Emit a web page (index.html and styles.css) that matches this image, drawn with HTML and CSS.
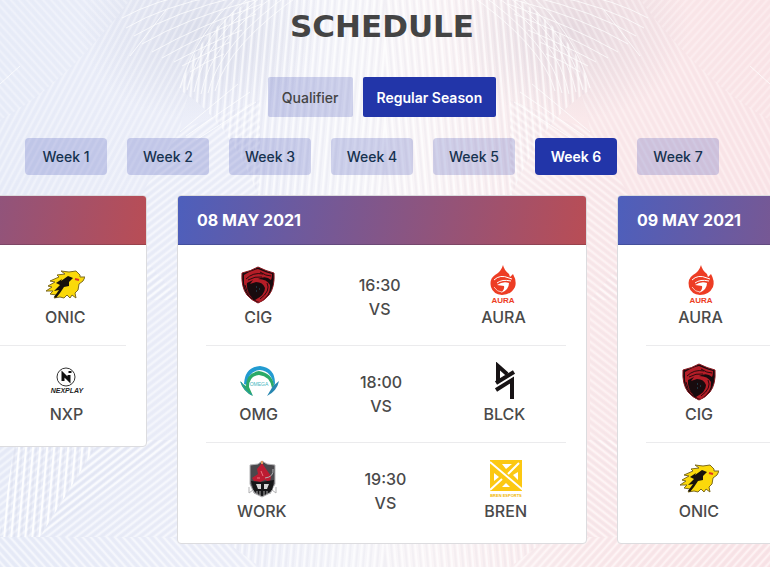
FILE: index.html
```
<!DOCTYPE html>
<html lang="en">
<head>
  <meta charset="UTF-8" />
  <meta name="viewport" content="width=device-width, initial-scale=1.0" />
  <title>Schedule</title>
  <link rel="stylesheet" href="styles.css">
</head>
<body>
  <!-- feather background, left half is mirrored to the right -->
  <svg class="feathers" viewBox="0 0 770 567" preserveAspectRatio="xMidYMid slice" aria-hidden="true">
    <defs>
      <pattern id="barbsA" width="6" height="6" patternUnits="userSpaceOnUse" patternTransform="rotate(28)">
        <path d="M2 0V6" stroke="#fff" stroke-width="2" />
        <path d="M5 0V6" stroke="#8c93b4" stroke-opacity=".14" />
      </pattern>
      <pattern id="barbsB" width="6" height="6" patternUnits="userSpaceOnUse" patternTransform="rotate(52)">
        <path d="M2 0V6" stroke="#fff" stroke-width="2" />
        <path d="M5 0V6" stroke="#8c93b4" stroke-opacity=".16" />
      </pattern>
      <pattern id="barbsC" width="7" height="7" patternUnits="userSpaceOnUse" patternTransform="rotate(5)">
        <path d="M2 0V7" stroke="#fff" stroke-width="2" />
        <path d="M5 0V7" stroke="#8c93b4" stroke-opacity=".18" />
      </pattern>
      <pattern id="barbsD" width="6" height="6" patternUnits="userSpaceOnUse" patternTransform="rotate(-42)">
        <path d="M2 0V6" stroke="#fff" stroke-width="2" />
        <path d="M5 0V6" stroke="#8c93b4" stroke-opacity=".14" />
      </pattern>
      <radialGradient id="shade">
        <stop offset="0" stop-color="#7d82a0" stop-opacity=".16" />
        <stop offset="1" stop-color="#7d82a0" stop-opacity="0" />
      </radialGradient>
      <g id="wing">
        <ellipse cx="200" cy="30" rx="120" ry="90" fill="url(#shade)" />
        <path d="M0 0H130Q60 90 0 120Z" fill="url(#barbsD)" opacity=".25" />
        <path d="M130 0H250Q190 60 180 130L120 230 0 300V120Q70 80 130 0Z" fill="url(#barbsA)" opacity=".3" />
        <path d="M250 0H385V200H260Q230 120 180 90Q190 40 250 0Z" fill="url(#barbsC)" opacity=".65" />
        <path d="M180 130L260 100V200H385V300H120V230Z" fill="url(#barbsB)" opacity=".45" />
        <path d="M0 300L120 230 180 300V440L40 537H0Z" fill="url(#barbsB)" opacity=".4" />
        <path d="M15 440H100L40 537H0Z" fill="url(#barbsC)" opacity=".9" />
        <path d="M100 440H250L220 537H40Z" fill="url(#barbsB)" opacity=".5" />
        <path d="M0 537H220L260 567H0Z" fill="url(#barbsD)" opacity=".5" />
        <path d="M220 537L250 440H385V567H260Z" fill="url(#barbsC)" opacity=".6" />
        <g fill="none" stroke="#fff" stroke-opacity=".75">
          <path d="M122 18Q155 0 200 -8M126 28Q163 6 220 -5M134 36Q174 12 240 -4M142 44Q186 18 255 0M152 52Q198 26 262 4M162 58Q204 34 256 14M174 62Q204 46 242 30M182 66Q205 54 230 42M190 72Q205 62 224 54" />
          <path d="M180 88Q196 30 243 -8M187 90Q201 34 256 -8M194 92Q206 36 268 -8M201 94Q212 38 280 -8M208 93Q220 42 292 -8M215 91Q228 44 304 -8" />
          <path d="M180 132L238 84M186 136L250 92M196 140L256 102M0 84L20 66M130 56L166 10" />
        </g>
      </g>
    </defs>
    <use href="#wing" />
    <use href="#wing" transform="translate(770 0) scale(-1 1)" />
  </svg>

  <!-- team logos -->
  <svg class="sprite" aria-hidden="true">
    <symbol id="onic" viewBox="0 0 40 40">
      <path d="M1 26L7 22 3 21 10 17 5 16 14 12 12 10 20 9 16 6 24 7 31 6 35 10 35 12 40 12 38 16 34 19 33 25 30 28 31 33 27 30 25 33 22 30 19 33 15 32 9 33 11 30 5 29 8 26Z" fill="#fbd90a" stroke="#7d6a20" />
      <path d="M11 18L17 14 16 16 23 11 28 13 24 17 24 21 19 22 15 28 11 33 9 32 14 25 9 26 15 20Z" fill="#17120c" />
      <path d="M30 14L34 15" stroke="#df3426" stroke-width="2" />
    </symbol>
    <symbol id="nxp" viewBox="0 0 40 40">
      <circle cx="19" cy="15" r="9" fill="#fff" stroke="#333" stroke-width="1" />
      <path d="M16 19V12L22 18V13M23 11V9" fill="none" stroke="#111" stroke-width="3" />
      <text x="20" y="31" text-anchor="middle" class="logo-text nxp-text">NEXPLAY</text>
    </symbol>
    <symbol id="cig" viewBox="0 0 40 40">
      <path d="M20 2Q28 6 36 8Q37 22 31 30Q26 36 20 38Q13 35 9 30Q3 22 4 8Q13 6 20 2Z" fill="#180b0e" stroke="#8c1820" />
      <path d="M6 10Q14 5 20 4Q29 8 34 9Q34 13 33 15Q28 10 20 14Q29 14 32 20Q33 30 22 37Q19 37 17 35Q27 30 27 23Q25 17 18 17L12 19 15 15 9 18Q8 26 15 34Q7 28 6 18Z" fill="#b51d27" />
      <path d="M8 14Q15 7 25 9M10 15Q17 11 24 12M22 7Q28 11 33 11M29 18Q33 26 22 34M7 20Q8 27 13 31" fill="none" stroke="#2a0a0e" />
      <path d="M18 22H19M21 24H22M18 26H19" stroke="#276173" />
    </symbol>
    <symbol id="aura" viewBox="0 0 40 40">
      <path d="M20 0Q21 5 26 9L27 12 30 9Q34 16 32 22Q28 30 19 30Q10 29 8 22Q6 14 12 10Q18 7 20 0Z" fill="#ed3d24" />
      <path d="M11 15Q17 9 26 13L29 14M14 18Q19 14 28 16" fill="none" stroke="#fff" stroke-width="1" />
      <path d="M14 20Q20 16 26 18Q26 25 18 28Q22 24 21 21Z" fill="#fff" />
      <path d="M11 22Q14 27 19 27" fill="none" stroke="#fbc3b8" />
      <text x="20" y="38" text-anchor="middle" class="logo-text aura-text">AURA</text>
    </symbol>
    <symbol id="omg" viewBox="0 0 40 40">
      <path d="M5 22Q6 5 21 4Q36 6 36 21L35 25Q33 9 21 8Q9 9 8 23Z" fill="#229bd1" />
      <path d="M7 24Q7 11 20 9Q33 11 35 23L33 26Q31 14 20 13Q10 14 10 25L14 34Q4 30 1 19Q5 23 7 24Z" fill="#2baa67" />
      <path d="M40 19Q38 29 28 34L34 24Z" fill="#2786b0" />
      <path d="M2 20Q6 29 13 33" fill="none" stroke="#2791b6" />
      <text x="20" y="24" text-anchor="middle" class="logo-text omg-text">OMEGA</text>
    </symbol>
    <symbol id="blck" viewBox="0 0 40 40">
      <path d="M14 19V4L23 12M12 21L30 10M12 28L28 18V37" fill="none" stroke="#171315" stroke-width="4" />
    </symbol>
    <symbol id="work" viewBox="0 0 40 40">
      <path d="M8 6L16 5 20 2 25 5 33 6 33 25 28 34 20 38 12 34 8 25Z" fill="#4a484c" stroke="#b5b5b7" />
      <path d="M20 4L24 10 29 17 28 23 23 21 18 23 12 22 10 19 16 15 15 10Z" fill="#bd1c32" />
      <path d="M9 22L19 23 32 21 30 32 20 37 12 32Z" fill="#171719" />
      <path d="M14 25H19V30H16ZM22 25H27L25 30H22Z" fill="#d6d6d6" />
      <path d="M15 32V35M18 32V37M22 32V37M25 32V35" stroke="#aaa" />
      <path d="M7 28V34L11 31 13 35M34 28V34L30 31 28 35M23 19Q32 18 31 10" fill="none" stroke="#b0b0b2" />
      <path d="M20 2V5" stroke="#dd9b62" stroke-width="2" />
      <path d="M19 12L21 17M15 19H18" stroke="#ed7480" />
    </symbol>
    <symbol id="bren" viewBox="0 0 40 40">
      <path d="M4 1H36V32H4Z" fill="#fcc812" />
      <path d="M4 3L37 31M33 4L22 15M16 20L4 31" stroke="#fff" stroke-width="2" />
      <path d="M16 5H26L20 10ZM8 14L13 18 8 22ZM32 13V21L27 16ZM20 24L24 28H16Z" fill="#fff" />
      <text x="20" y="38" text-anchor="middle" class="logo-text bren-text">BREN ESPORTS</text>
    </symbol>
  </svg>

  <main class="schedule">
    <h1 class="title">SCHEDULE</h1>

    <div class="stages">
      <button class="stage">Qualifier</button>
      <button class="stage active">Regular Season</button>
    </div>

    <div class="weeks">
      <button class="week">Week 1</button>
      <button class="week">Week 2</button>
      <button class="week">Week 3</button>
      <button class="week">Week 4</button>
      <button class="week">Week 5</button>
      <button class="week active">Week 6</button>
      <button class="week">Week 7</button>
    </div>

    <div class="days">
      <section class="day">
        <h2 class="date">07 MAY 2021</h2>
        <div class="matches">
          <div class="match">
            <div class="team"><svg class="logo"><use href="#bren" /></svg>BREN</div>
            <div class="time">18:00<br>VS</div>
            <div class="team"><svg class="logo"><use href="#onic" /></svg>ONIC</div>
          </div>
          <div class="match">
            <div class="team"><svg class="logo"><use href="#work" /></svg>WORK</div>
            <div class="time">19:30<br>VS</div>
            <div class="team"><svg class="logo"><use href="#nxp" /></svg>NXP</div>
          </div>
        </div>
      </section>

      <section class="day">
        <h2 class="date">08 MAY 2021</h2>
        <div class="matches">
          <div class="match">
            <div class="team"><svg class="logo"><use href="#cig" /></svg>CIG</div>
            <div class="time">16:30<br>VS</div>
            <div class="team"><svg class="logo"><use href="#aura" /></svg>AURA</div>
          </div>
          <div class="match">
            <div class="team"><svg class="logo"><use href="#omg" /></svg>OMG</div>
            <div class="time">18:00<br>VS</div>
            <div class="team"><svg class="logo"><use href="#blck" /></svg>BLCK</div>
          </div>
          <div class="match">
            <div class="team"><svg class="logo"><use href="#work" /></svg>WORK</div>
            <div class="time">19:30<br>VS</div>
            <div class="team"><svg class="logo"><use href="#bren" /></svg>BREN</div>
          </div>
        </div>
      </section>

      <section class="day">
        <h2 class="date">09 MAY 2021</h2>
        <div class="matches">
          <div class="match">
            <div class="team"><svg class="logo"><use href="#aura" /></svg>AURA</div>
            <div class="time">16:30<br>VS</div>
            <div class="team"><svg class="logo"><use href="#nxp" /></svg>NXP</div>
          </div>
          <div class="match">
            <div class="team"><svg class="logo"><use href="#cig" /></svg>CIG</div>
            <div class="time">18:00<br>VS</div>
            <div class="team"><svg class="logo"><use href="#omg" /></svg>OMG</div>
          </div>
          <div class="match">
            <div class="team"><svg class="logo"><use href="#onic" /></svg>ONIC</div>
            <div class="time">19:30<br>VS</div>
            <div class="team"><svg class="logo"><use href="#blck" /></svg>BLCK</div>
          </div>
        </div>
      </section>
    </div>
  </main>
</body>
</html>
```

FILE: styles.css
```
* {
  margin: 0;
  padding: 0;
  box-sizing: border-box;
}

body {
  min-height: 100vh;
  font-family: Inter, "Open Sans", sans-serif;
  font-size: 16px;
  line-height: 24px;
  color: #4a4a4a;
  background: linear-gradient(90deg, #e8ecf8 0%, #edeff9 30%, #f6f6fa 46%, #faf5f7 56%, #fae9eb 75%, #fae4e7 100%);
  overflow: hidden;
}

.feathers {
  position: absolute;
  top: 0;
  left: 0;
  width: 100%;
  height: 100%;
  z-index: -1;
}

.sprite {
  display: none;
}

.schedule {
  padding: 8px 6px 0 0;
}

.title {
  font-family: "DejaVu Sans", sans-serif;
  font-size: 31px;
  line-height: 36px;
  font-weight: bold;
  text-align: center;
  color: #444;
}

.stages {
  display: flex;
  justify-content: center;
  gap: 10px;
  margin-top: 33px;
}

.stage,
.week {
  font-family: inherit;
  font-size: 14px;
  font-weight: 500;
  border: none;
  background: rgba(34, 51, 170, 0.2);
  cursor: pointer;
}

.stage {
  height: 40px;
  padding: 0 14px;
  border-radius: 2px;
  color: #444;
}

.weeks {
  display: flex;
  justify-content: center;
  gap: 20px;
  margin-top: 21px;
  padding-right: 20px;
}

.week {
  min-width: 82px;
  height: 37px;
  padding: 0 15px;
  border-radius: 4px;
  color: #16324f;
}

.stage.active,
.week.active {
  background: #2235a9;
  color: #fff;
  font-weight: 600;
}

.days {
  display: flex;
  justify-content: center;
  align-items: flex-start;
  gap: 30px;
  margin-top: 20px;
}

.day {
  flex: 0 0 410px;
  background: #fff;
  border: 1px solid #dcdcdf;
  border-radius: 4px;
  overflow: hidden;
}

.date {
  padding: 12px 19px;
  font-size: 16px;
  line-height: 24px;
  font-weight: bold;
  color: #fff;
  background: linear-gradient(100deg, #4d5fbc, #b94d55);
  border-bottom: 1px solid rgba(0, 0, 0, 0.15);
}

.matches {
  padding: 4px 20px;
}

.match {
  display: flex;
  justify-content: space-around;
  align-items: center;
  padding: 16px 0;
  font-weight: 500;
}

/* divider starts a little inside the row */
.match + .match {
  padding-top: 17px;
  background: linear-gradient(#ebebed, #ebebed) 8px 0 / 100% 1px no-repeat;
}

.team {
  text-align: center;
}

.logo {
  display: block;
  width: 40px;
  height: 40px;
  margin: 0 auto;
}

.time {
  text-align: center;
}

.logo-text {
  font-family: "Liberation Sans", sans-serif;
  font-weight: bold;
}

.nxp-text {
  font-size: 7px;
  font-style: italic;
  fill: #222;
}

.aura-text {
  font-size: 8px;
  fill: #ed3d24;
}

.omg-text {
  font-size: 5px;
  font-weight: normal;
  fill: #45b5bd;
}

.bren-text {
  font-size: 4px;
  fill: #f0b800;
}
```
